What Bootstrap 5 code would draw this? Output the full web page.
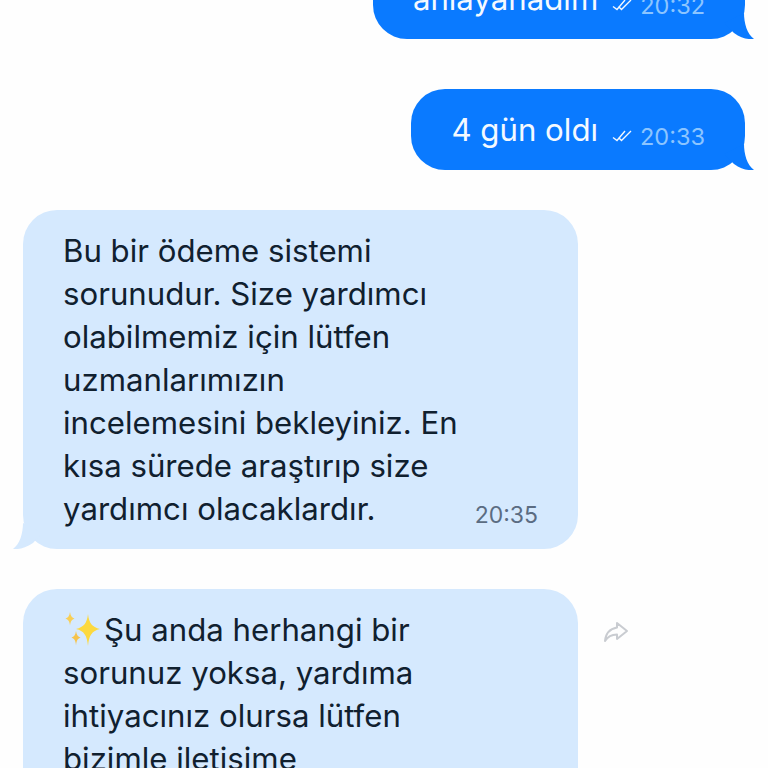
<!DOCTYPE html>
<html lang="tr">
<head>
    <meta charset="UTF-8">
    <meta name="viewport" content="width=device-width, initial-scale=1.0">
    <title>Sohbet</title>
    <link href="https://cdn.jsdelivr.net/npm/bootstrap@5.3.3/dist/css/bootstrap.min.css" rel="stylesheet">
    <style>
        html, body {
            height: 768px;
            overflow: hidden;
        }
        body {
            background-color: #fefefe;
            font-family: Inter, "Liberation Sans", sans-serif;
        }
        .chat-wrap {
            margin-top: -42px;
            padding: 0 23px;
            gap: 40px;
        }
        .chat-wrap > .chat-row + .chat-row.out-next {
            margin-top: 10px;
        }
        .bubble {
            position: relative;
            border-radius: 34px;
            font-size: 31.2px;
            line-height: 43px;
        }
        .bubble-out {
            background-color: #0a7aff;
            color: #f4f9ff;
            padding: 20px 40px 18px 40px;
            height: 81px;
        }
        .bubble-in {
            background-color: #d5e9fe;
            color: #10202f;
            width: 555px;
            padding: 20px 40px 18px 40px;
        }
        .tail {
            position: absolute;
            bottom: 0;
            width: 30px;
            height: 26px;
        }
        .tail-out {
            right: -9px;
        }
        .tail-in {
            left: -11px;
        }
        .time-out {
            color: #8cc5ff;
            font-size: 23.5px;
            line-height: 1;
            margin-top: 16px;
        }
        .time-in {
            color: #5b6c82;
            font-size: 23px;
            line-height: 1;
            position: absolute;
            right: 40px;
            bottom: 22px;
        }
        .ticks {
            width: 21px;
            height: 12px;
            margin: 21px 7px 0 14px;
        }
        .forward-icon {
            width: 26px;
            height: 22px;
            margin: 32px 0 0 25px;
        }
        .sparkle {
            width: 41px;
            height: 40px;
            vertical-align: -9px;
        }
        .tall-bubble {
            height: 240px;
        }
    </style>
</head>
<body>
    <div class="chat-wrap d-flex flex-column">
        <div class="chat-row d-flex justify-content-end">
            <div class="bubble bubble-out d-flex">
                <span>anlayanadım</span>
                <svg class="ticks" viewBox="0 0 21 12"><path d="M1 7.500L5 10.500 13 1M6.500 7.500L9.500 10.500 19 1" fill="none" stroke="#f4f9ff" stroke-width="1.400"/></svg>
                <span class="time-out">20:32</span>
                <svg class="tail tail-out" viewBox="0 0 30 26"><path d="M20 0C20 10 23 21 30 26 24 26.500 17 25.500 10 20L0 10z" fill="#0a7aff"/></svg>
            </div>
        </div>
        <div class="chat-row out-next d-flex justify-content-end">
            <div class="bubble bubble-out d-flex">
                <span>4 gün oldı</span>
                <svg class="ticks" viewBox="0 0 21 12"><path d="M1 7.500L5 10.500 13 1M6.500 7.500L9.500 10.500 19 1" fill="none" stroke="#f4f9ff" stroke-width="1.400"/></svg>
                <span class="time-out">20:33</span>
                <svg class="tail tail-out" viewBox="0 0 30 26"><path d="M20 0C20 10 23 21 30 26 24 26.500 17 25.500 10 20L0 10z" fill="#0a7aff"/></svg>
            </div>
        </div>
        <div class="chat-row d-flex">
            <div class="bubble bubble-in">
                Bu bir ödeme sistemi<br>
                sorunudur. Size yardımcı<br>
                olabilmemiz için lütfen<br>
                uzmanlarımızın<br>
                incelemesini bekleyiniz. En<br>
                kısa sürede araştırıp size<br>
                yardımcı olacaklardır.
                <span class="time-in">20:35</span>
                <svg class="tail tail-in" viewBox="0 0 30 26"><path d="M11 0C11 10 8 21 1 26 6 26.500 13 25.500 21 20L30 10z" fill="#d5e9fe"/></svg>
            </div>
        </div>
        <div class="chat-row d-flex align-items-start">
            <div class="bubble bubble-in tall-bubble">
                <svg class="sparkle" viewBox="0 0 41 40">
                    <path d="M25 4c1 9 4 13 12 15-8 2-11 6-12 17-1-11-4-15-12-17 8-2 11-6 12-15z" fill="#fcd93f"/>
                    <path d="M7 2c.5 4 2 5.500 4.500 6.500-2.500 1-4 2.500-4.500 7-.5-4.500-2-6-4.500-7 2.500-1 4-2.500 4.500-6.500z" fill="#f8cf55"/>
                    <path d="M13 21c.5 4 2 5.500 4.500 6.500-2.500 1-4 2.500-4.500 8-.5-5.500-2-7-4.500-8 2.500-1 4-2.500 4.500-6.500z" fill="#f6c34c"/>
                </svg>Şu anda herhangi bir<br>
                sorunuz yoksa, yardıma<br>
                ihtiyacınız olursa lütfen<br>
                bizimle iletişime
            </div>
            <svg class="forward-icon" viewBox="0 0 26 22"><path d="M14 2l10 8-10 8v-4.500C9 13.500 5 15 2 20c.5-6 4-12 12-13.500z" fill="none" stroke="#c9ccd1" stroke-width="2" stroke-linejoin="round"/></svg>
        </div>
    </div>
    <script src="https://cdn.jsdelivr.net/npm/bootstrap@5.3.3/dist/js/bootstrap.bundle.min.js"></script>
</body>
</html>
